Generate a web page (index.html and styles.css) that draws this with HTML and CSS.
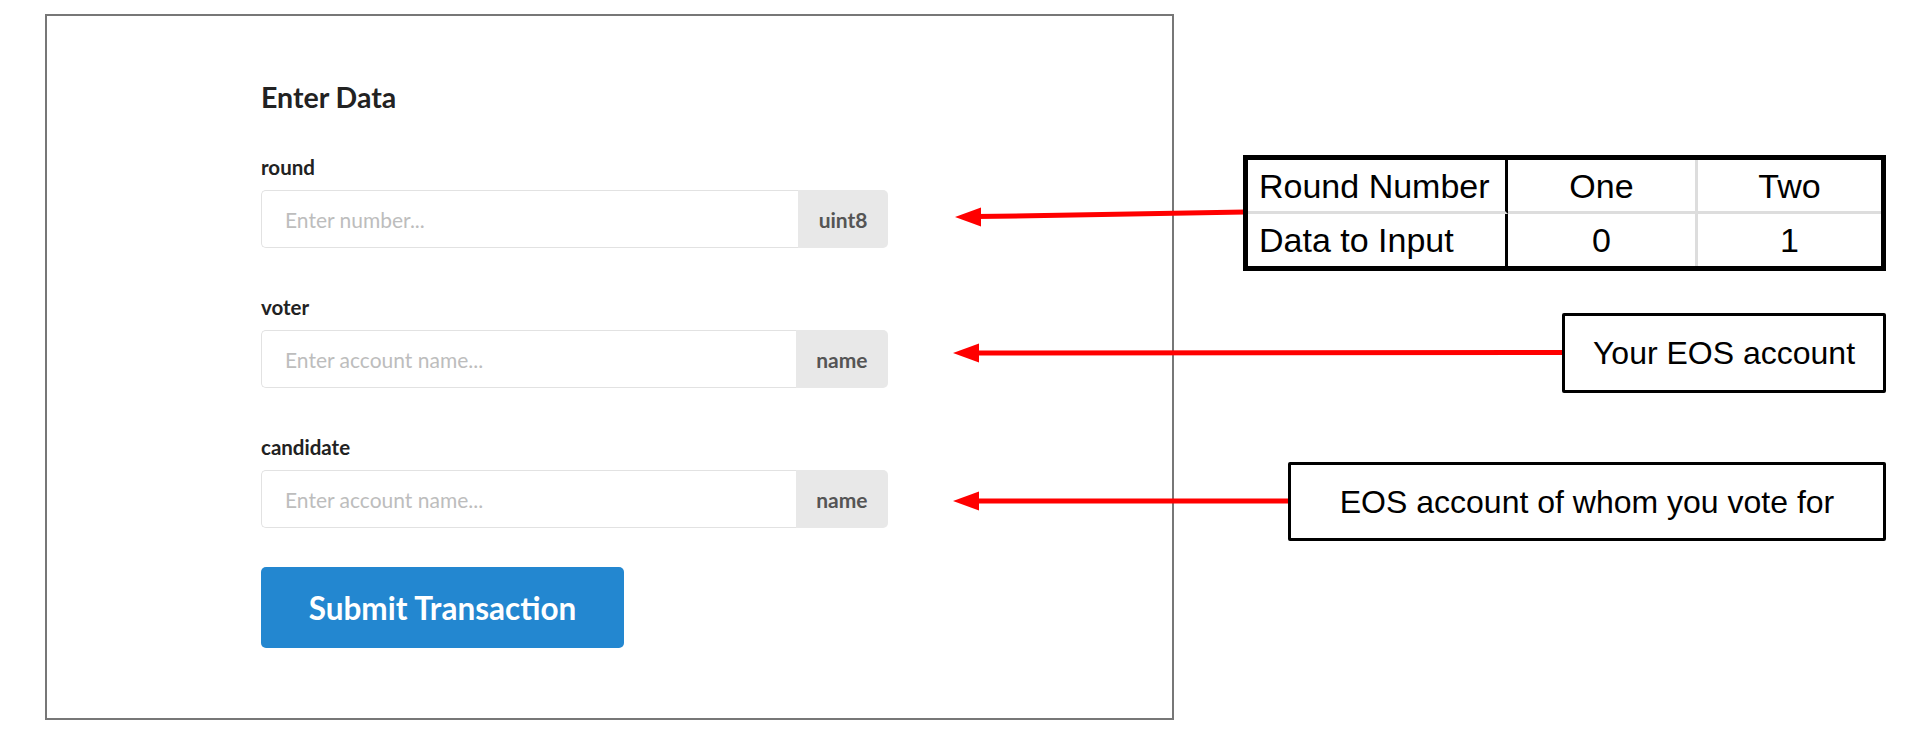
FILE: index.html
```html
<!DOCTYPE html>
<html lang="en">
<head>
<meta charset="utf-8">
<title>Enter Data</title>
<link rel="stylesheet" href="styles.css">
</head>
<body>
<div class="page">
  <section class="panel">
    <h2 class="panel-title">Enter Data</h2>
    <form class="fields">
      <div class="field">
        <label class="field-label">round</label>
        <div class="input-group">
          <input class="input" type="text" placeholder="Enter number...">
          <span class="addon">uint8</span>
        </div>
      </div>
      <div class="field">
        <label class="field-label">voter</label>
        <div class="input-group">
          <input class="input" type="text" placeholder="Enter account name...">
          <span class="addon">name</span>
        </div>
      </div>
      <div class="field">
        <label class="field-label">candidate</label>
        <div class="input-group">
          <input class="input" type="text" placeholder="Enter account name...">
          <span class="addon">name</span>
        </div>
      </div>
    </form>
    <button class="submit" type="button">Submit Transaction</button>
  </section>

  <div class="annotations">
    <svg class="arrows" width="1920" height="739" viewBox="0 0 1920 739">
      <line x1="1245" y1="212" x2="976" y2="216.6" stroke="#ff0000" stroke-width="5"/>
      <polygon points="955,217 981,207.5 981,226.5" fill="#ff0000"/>
      <line x1="1563" y1="352.5" x2="974" y2="353" stroke="#ff0000" stroke-width="5"/>
      <polygon points="953,353 979,343.5 979,362.5" fill="#ff0000"/>
      <line x1="1289" y1="501" x2="974" y2="501" stroke="#ff0000" stroke-width="5"/>
      <polygon points="953,501 979,491.5 979,510.5" fill="#ff0000"/>
    </svg>

    <div class="legend">
      <div class="cell c1 r1">Round Number</div>
      <div class="cell c2 r1">One</div>
      <div class="cell c3 r1">Two</div>
      <div class="cell c1">Data to Input</div>
      <div class="cell c2">0</div>
      <div class="cell c3">1</div>
    </div>

    <div class="callout callout-voter">Your EOS account</div>
    <div class="callout callout-candidate">EOS account of whom you vote for</div>
  </div>
</div>
</body>
</html>
```

FILE: styles.css
```css
* { box-sizing: border-box; }

html, body {
  margin: 0;
  padding: 0;
  background: #ffffff;
}

.page {
  position: relative;
  width: 1920px;
  height: 739px;
  padding: 14px 0 0 45px;
  overflow: hidden;
}

/* ---------- form panel ---------- */
.panel {
  width: 1129px;
  height: 706px;
  border: 2px solid #777777;
  padding: 64px 0 0 214px;
  display: flex;
  flex-direction: column;
  align-items: flex-start;
  font-family: Lato, "Open Sans", "Liberation Sans", sans-serif;
  color: #222222;
}

.panel-title {
  margin: 0 0 41px 0;
  height: 34px;
  font-size: 28.5px;
  line-height: 34px;
  font-weight: 700;
  color: #222222;
}

.fields {
  display: flex;
  flex-direction: column;
  gap: 47px;
  margin: 0;
}

.field {
  display: flex;
  flex-direction: column;
}

.field-label {
  font-size: 20.5px;
  line-height: 24px;
  font-weight: 700;
  color: #222222;
  margin-bottom: 11px;
}

.input-group {
  display: flex;
  width: 627px;
  height: 58px;
}

.input {
  flex: 1;
  min-width: 0;
  height: 58px;
  margin: 0;
  padding: 0 23px;
  border: 1px solid #e2e2e2;
  border-right: none;
  border-radius: 5px 0 0 5px;
  font-family: inherit;
  font-size: 21px;
  color: #333333;
  background: #ffffff;
  outline: none;
}

.input::placeholder {
  color: #bdbdbd;
  opacity: 1;
}

.addon {
  display: flex;
  align-items: center;
  padding: 0 20.5px;
  background: #e8e8e8;
  border-radius: 0 5px 5px 0;
  font-size: 21px;
  font-weight: 700;
  color: #555555;
}

.submit {
  margin-top: 39px;
  width: 363px;
  height: 81px;
  padding: 0;
  border: none;
  border-radius: 5px;
  background: #2387d0;
  color: #ffffff;
  font-family: inherit;
  font-size: 31.5px;
  font-weight: 700;
  cursor: pointer;
}

/* ---------- diagram annotations ---------- */
.annotations {
  position: absolute;
  inset: 0;
  pointer-events: none;
  font-family: "Liberation Sans", Arial, sans-serif;
  color: #000000;
}

.arrows {
  position: absolute;
  left: 0;
  top: 0;
}

.legend {
  position: absolute;
  left: 1243px;
  top: 155px;
  width: 643px;
  height: 116px;
  border: 5px solid #000000;
  background: #ffffff;
  display: grid;
  grid-template-columns: 260px 190px 1fr;
  grid-template-rows: 54px 1fr;
}

.cell {
  display: flex;
  align-items: center;
  justify-content: center;
  font-size: 34px;
  line-height: 1;
}

.cell.c1 {
  justify-content: flex-start;
  padding-left: 11px;
  border-right: 3px solid #000000;
}

.cell.c2 {
  border-right: 3px solid #dddddd;
}

.cell.r1 {
  border-bottom: 3px solid #dddddd;
}

.callout {
  position: absolute;
  display: flex;
  align-items: center;
  justify-content: center;
  border: 3px solid #000000;
  border-radius: 2px;
  background: #ffffff;
  font-size: 32px;
  line-height: 1;
}

.callout-voter {
  left: 1562px;
  top: 313px;
  width: 324px;
  height: 80px;
}

.callout-candidate {
  left: 1288px;
  top: 462px;
  width: 598px;
  height: 79px;
}
```
